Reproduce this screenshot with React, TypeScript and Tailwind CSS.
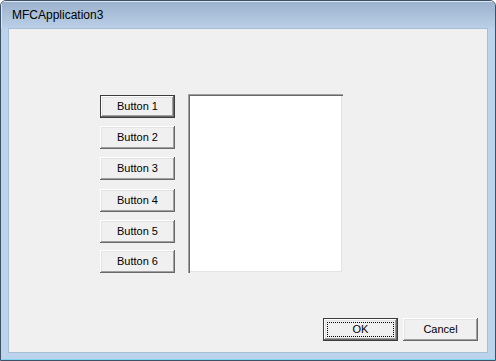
import React from "react";

// Classic Win32 dialog (MFC) inside a Vista basic window frame
const raised =
  "shadow-[inset_-1px_-1px_0_#696969,inset_1px_1px_0_#ffffff,inset_-2px_-2px_0_#a0a0a0,inset_2px_2px_0_#e3e3e3]";

function DlgButton({ label, isDefault, focused, className = "" }: { label: string; isDefault?: boolean; focused?: boolean; className?: string }) {
  return (
    <div
      className={`relative w-[75px] h-[23px] flex items-center justify-center bg-[#f0f0f0] text-[11px] text-black ${
        isDefault ? "border border-[#3c3c3c]" : ""
      } ${raised} ${className}`}
    >
      {focused && <span className="absolute inset-[3px] border border-dotted border-black" />}
      <span className="leading-none">{label}</span>
    </div>
  );
}

export default function App() {
  const buttons = [
    { label: "Button 1", mt: "mt-[1px]", isDefault: true },
    { label: "Button 2", mt: "mt-[8px]" },
    { label: "Button 3", mt: "mt-[8px]" },
    { label: "Button 4", mt: "mt-[9px]" },
    { label: "Button 5", mt: "mt-[8px]" },
    { label: "Button 6", mt: "mt-[7px]" },
  ];

  return (
    <div
      className="w-[496px] h-[361px] flex flex-col rounded-t-[6px] border border-[#3e5166] bg-[#b9d1ea] overflow-hidden"
      style={{ fontFamily: '"Liberation Sans", Arial, sans-serif' }}
    >
      {/* Title bar */}
      <div className="h-[27px] shrink-0 flex items-center pl-[11px] pt-[1px] bg-gradient-to-b from-[#9bb1cc] to-[#bad0e8] shadow-[inset_1px_1px_0_#dbe6f3]">
        <span className="text-[12px] text-black">MFCApplication3</span>
      </div>

      {/* Frame sides */}
      <div className="flex-1 flex px-[7px] pb-[6px] bg-[#bcd3ec]">
        <div className="flex-1 flex flex-col bg-[#f0f0f0] border border-[#a8bdd6]">
          <div className="flex pl-[91px] pt-[65px]">
            <div className="flex flex-col">
              {buttons.map((b) => (
                <DlgButton key={b.label} label={b.label} isDefault={b.isDefault} className={b.mt} />
              ))}
            </div>
            <div className="ml-[13px] w-[155px] h-[179px] bg-white shadow-[inset_1px_1px_0_#a0a0a0,inset_2px_2px_0_#696969,inset_-1px_-1px_0_#f0f0f0,inset_-2px_-2px_0_#e3e3e3]" />
          </div>

          <div className="mt-auto flex justify-end gap-[5px] pr-[9px] pb-[11px]">
            <DlgButton label="OK" isDefault focused />
            <DlgButton label="Cancel" />
          </div>
        </div>
      </div>
      <div className="h-[1px] bg-[#7fd4f0]" />
    </div>
  );
}
